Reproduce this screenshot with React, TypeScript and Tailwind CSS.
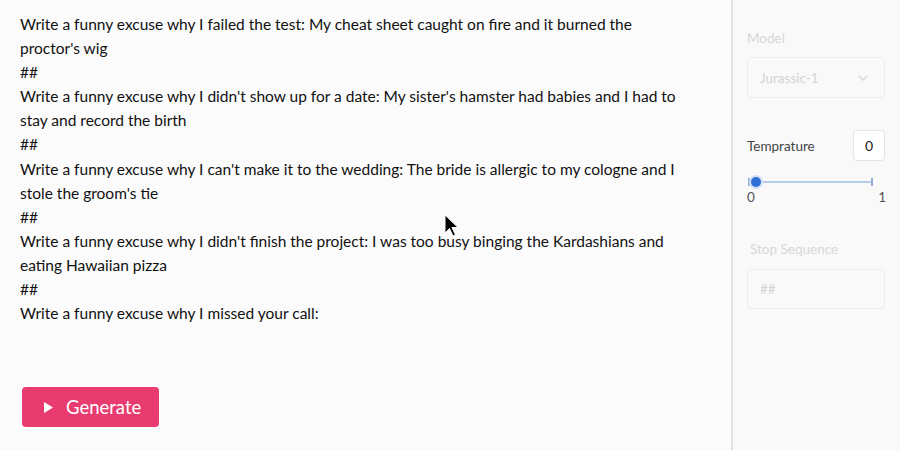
import React from "react";

const lines = [
  "Write a funny excuse why I failed the test: My cheat sheet caught on fire and it burned the proctor's wig",
  "##",
  "Write a funny excuse why I didn't show up for a date: My sister's hamster had babies and I had to stay and record the birth",
  "##",
  "Write a funny excuse why I can't make it to the wedding: The bride is allergic to my cologne and I stole the groom's tie",
  "##",
  "Write a funny excuse why I didn't finish the project: I was too busy binging the Kardashians and eating Hawaiian pizza",
  "##",
  "Write a funny excuse why I missed your call:",
];

export default function App() {
  return (
    <div
      className="relative flex h-[450px] w-[900px] bg-[#fbfbfb] text-[#111]"
      style={{ fontFamily: "Lato, 'Noto Sans', sans-serif" }}
    >
      {/* Prompt area */}
      <div className="flex flex-1 flex-col justify-between pl-5 pr-6 pt-[12px] pb-[23px]">
        <div className="text-[15.5px] leading-[24.1px] w-[672px]">
          {lines.map((l, i) => (
            <div key={i}>{l}</div>
          ))}
        </div>
        <button className="ml-[2px] flex h-10 w-[137px] items-center gap-3 rounded bg-[#e83c70] pl-[22px] text-[18.5px] text-white">
          <svg width="10" height="11" viewBox="0 0 10 11">
            <path d="M0 0 L9 5.5 L0 11 Z" fill="white" />
          </svg>
          <span className="mt-[1px]">Generate</span>
        </button>
      </div>

      {/* Settings panel */}
      <div className="w-[169px] border-l-2 border-[#e2e2e2] bg-[#f9f9f9] pl-[14px] pr-[15px] pt-[28px] text-[13.5px]">
        <div className="text-[#d6d6d6]">Model</div>
        <div className="mt-[9px] flex h-[41px] items-center justify-between rounded border border-[#ececec] pl-[12px] pr-[16px] text-[#d4d4d4]">
          <span>Jurassic-1</span>
          <svg width="10" height="6" viewBox="0 0 10 6">
            <path d="M1 1 L5 5 L9 1" stroke="#d8d8d8" strokeWidth="1.5" fill="none" />
          </svg>
        </div>

        <div className="mt-[32px] flex items-center justify-between">
          <span className="text-[#444]">Temprature</span>
          <div className="flex h-[31px] w-[32px] items-center justify-center rounded border border-[#e4e4e4] bg-white text-[14px] text-[#222]">
            0
          </div>
        </div>
        <div className="relative mt-[16px] ml-[1px] mr-[12px] h-[10px]">
          <div className="absolute left-0 right-0 top-[4px] h-[2px] bg-[#b7cde9]" />
          <div className="absolute left-0 top-[1px] h-[8px] w-[2px] bg-[#8fb0dc]" />
          <div className="absolute right-0 top-[1px] h-[8px] w-[2px] bg-[#8fb0dc]" />
          <div className="absolute left-[3px] top-[0px] h-[10px] w-[10px] rounded-full bg-[#2f6fd8] ring-2 ring-[#d3e0f5]" />
        </div>
        <div className="flex justify-between text-[#555]">
          <span>0</span>
          <span className="-mr-[1px]">1</span>
        </div>

        <div className="mt-[31px] pl-[3px] text-[#d8d8d8]">Stop Sequence</div>
        <div className="mt-[10px] flex h-[40px] items-center rounded border border-[#ececec] pl-[12px] text-[#d4d4d4]">
          ##
        </div>
      </div>

      {/* Mouse cursor */}
      <svg
        className="absolute left-[444px] top-[214px]"
        width="16"
        height="24"
        viewBox="0 0 16 24"
      >
        <path d="M1 1 L1 19 L5.5 14.5 L9 22 L11.5 21 L8 13.5 L14 13.5 Z" fill="#000" stroke="#fff" strokeWidth="1" />
      </svg>
    </div>
  );
}
